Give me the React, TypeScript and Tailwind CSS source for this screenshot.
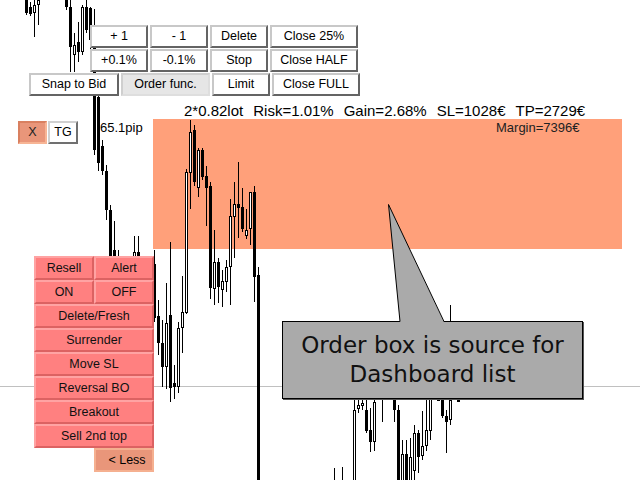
import React from "react";

// [x, bodyTop, bodyBottom, high, low, filled]
const candles: [number, number, number, number, number, number][] = [
  [26, 0, 13, 0, 15, 1],
  [30, 7, 14, 2, 16, 1],
  [34, 5, 13, 0, 37, 0],
  [38, 0, 5, 0, 25, 0],
  [66, 0, 7, 0, 10, 1],
  [70, 7, 47, 0, 72, 1],
  [74, 45, 55, 33, 72, 0],
  [78, 42, 52, 22, 62, 1],
  [82, 7, 52, 5, 55, 0],
  [86, 7, 30, 0, 33, 1],
  [90, 8, 40, 7, 50, 1],
  [94, 28, 150, 9, 155, 1],
  [98, 97, 163, 90, 171, 1],
  [102, 146, 171, 140, 175, 1],
  [106, 171, 210, 165, 220, 1],
  [110, 210, 300, 205, 310, 1],
  [114, 250, 300, 221, 310, 1],
  [118, 260, 300, 250, 310, 1],
  [134, 252, 300, 236, 310, 0],
  [138, 252, 300, 236, 310, 1],
  [154, 264, 318, 250, 322, 1],
  [158, 316, 343, 300, 355, 1],
  [162, 343, 367, 320, 387, 1],
  [166, 323, 367, 283, 389, 0],
  [170, 315, 388, 242, 402, 1],
  [174, 383, 387, 365, 399, 1],
  [178, 328, 387, 322, 393, 0],
  [182, 312, 328, 276, 353, 0],
  [186, 172, 313, 169, 314, 0],
  [190, 132, 173, 120, 209, 0],
  [194, 130, 182, 125, 186, 1],
  [198, 150, 188, 148, 197, 0],
  [202, 150, 177, 148, 180, 1],
  [206, 176, 188, 166, 226, 1],
  [210, 186, 288, 182, 299, 1],
  [214, 262, 289, 230, 305, 0],
  [218, 262, 287, 258, 303, 1],
  [222, 281, 290, 270, 307, 0],
  [226, 267, 282, 260, 292, 0],
  [230, 216, 267, 199, 305, 0],
  [234, 204, 217, 182, 258, 0],
  [238, 204, 208, 162, 238, 1],
  [242, 207, 229, 188, 232, 1],
  [246, 230, 236, 209, 239, 0],
  [250, 192, 229, 192, 245, 0],
  [254, 192, 277, 186, 302, 1],
  [258, 275, 520, 267, 520, 1],
  [334, 480, 520, 468, 520, 1],
  [342, 480, 520, 467, 520, 1],
  [354, 410, 520, 399, 520, 0],
  [358, 405, 409, 398, 413, 0],
  [362, 403, 406, 398, 410, 0],
  [366, 410, 431, 399, 433, 1],
  [370, 430, 442, 408, 452, 1],
  [374, 402, 442, 398, 451, 0],
  [382, 399, 400, 398, 422, 1],
  [394, 399, 410, 398, 422, 1],
  [398, 410, 520, 405, 520, 1],
  [402, 454, 520, 440, 520, 0],
  [406, 454, 520, 440, 520, 1],
  [410, 457, 520, 438, 520, 0],
  [414, 433, 471, 425, 480, 0],
  [418, 433, 457, 430, 473, 1],
  [422, 446, 456, 411, 460, 0],
  [426, 430, 446, 400, 451, 0],
  [430, 399, 431, 300, 440, 0],
  [438, 398, 401, 398, 401, 1],
  [442, 399, 416, 398, 418, 1],
  [446, 416, 422, 410, 453, 1],
  [450, 400, 420, 305, 425, 0],
  [454, 398, 400, 398, 400, 1],
  [458, 399, 402, 399, 402, 1],
];

const grayBtn =
  "flex items-center justify-center h-[23px] border-2 border-t-[#c8c8c8] border-l-[#c8c8c8] border-r-[#646464] border-b-[#646464] bg-white text-black";
const redBtn =
  "flex flex-1 items-center justify-center h-[24px] border-2 border-t-[#ffa3a3] border-l-[#ffa3a3] border-r-[#dc6262] border-b-[#dc6262] bg-[#ff8080] text-[#111]";

function Chart() {
  return (
    <svg className="absolute inset-0" width={640} height={480} shapeRendering="crispEdges">
      <rect x={153} y={119} width={469} height={130} fill="#ffa07a" />
      <line x1={0} y1={386.5} x2={640} y2={386.5} stroke="#c0c0c0" strokeWidth={1} />
      {candles.map(([x, t, b, h, l, f]) => (
        <g key={x}>
          <line x1={x + 0.5} y1={h} x2={x + 0.5} y2={l} stroke="#000" strokeWidth={1} />
          {f ? (
            <rect x={x - 1} y={t} width={3} height={Math.max(1, b - t)} fill="#000" />
          ) : (
            <rect x={x - 0.5} y={t + 0.5} width={2} height={Math.max(1, b - t - 1)} fill="#fff" stroke="#000" strokeWidth={1} />
          )}
        </g>
      ))}
    </svg>
  );
}

export default function App() {
  return (
    <div className="relative w-[640px] h-[480px] overflow-hidden bg-white font-['Liberation_Sans',Arial,sans-serif] text-black">
      <Chart />

      <div className="absolute left-[184px] top-[102px] flex gap-[10px] text-[15px] leading-[17px] whitespace-pre">
        <span>2*0.82lot</span>
        <span>Risk=1.01%</span>
        <span>Gain=2.68%</span>
        <span>SL=1028€</span>
        <span>TP=2729€</span>
      </div>
      <div className="absolute left-[496px] top-[120px] text-[13px] leading-[15px] text-[#222]">Margin=7396€</div>
      <div className="absolute left-[100px] top-[120px] text-[13px] leading-[15px]">65.1pip</div>

      <div className="absolute left-[29px] top-[25px] flex flex-col gap-[1px] text-[12.5px]">
        <div className="flex gap-[2px] pl-[61px]">
          <div className={`${grayBtn} w-[58px]`}>+ 1</div>
          <div className={`${grayBtn} w-[58px]`}>- 1</div>
          <div className={`${grayBtn} w-[58px]`}>Delete</div>
          <div className={`${grayBtn} w-[88px]`}>Close 25%</div>
        </div>
        <div className="flex gap-[2px] pl-[61px]">
          <div className={`${grayBtn} w-[58px]`}>+0.1%</div>
          <div className={`${grayBtn} w-[58px]`}>-0.1%</div>
          <div className={`${grayBtn} w-[58px]`}>Stop</div>
          <div className={`${grayBtn} w-[88px]`}>Close HALF</div>
        </div>
        <div className="flex gap-[2px]">
          <div className={`${grayBtn} w-[90px]`}>Snap to Bid</div>
          <div className="flex items-center justify-center h-[23px] w-[89px] border-2 border-t-[#cfcfcf] border-l-[#cfcfcf] border-r-[#dedede] border-b-[#dedede] bg-[#e6e6e6]">
            Order func.
          </div>
          <div className={`${grayBtn} w-[58px]`}>Limit</div>
          <div className={`${grayBtn} w-[88px]`}>Close FULL</div>
        </div>
      </div>

      <div className="absolute left-[18px] top-[121px] flex gap-[1px] text-[12.5px]">
        <div className="flex items-center justify-center w-[29px] h-[23px] border-2 border-t-[#d98060] border-l-[#d98060] border-r-[#f7b595] border-b-[#f7b595] bg-[#e9967a] text-[#222]">
          X
        </div>
        <div className="flex items-center justify-center w-[30px] h-[23px] border-2 border-t-[#d0d0d0] border-l-[#d0d0d0] border-r-[#707070] border-b-[#707070] bg-white">
          TG
        </div>
      </div>

      <div className="absolute left-[34px] top-[256px] w-[120px] flex flex-col text-[12.5px]">
        <div className="flex">
          <div className={redBtn}>Resell</div>
          <div className={redBtn}>Alert</div>
        </div>
        <div className="flex">
          <div className={redBtn}>ON</div>
          <div className={redBtn}>OFF</div>
        </div>
        <div className="flex"><div className={redBtn}>Delete/Fresh</div></div>
        <div className="flex"><div className={redBtn}>Surrender</div></div>
        <div className="flex"><div className={redBtn}>Move SL</div></div>
        <div className="flex"><div className={redBtn}>Reversal BO</div></div>
        <div className="flex"><div className={redBtn}>Breakout</div></div>
        <div className="flex"><div className={redBtn}>Sell 2nd top</div></div>
      </div>
      <div className="absolute left-[94px] top-[448px] flex items-center justify-center w-[60px] h-[24px] border-2 border-[#f5b090] bg-[#e9967a] text-[12.5px] pl-[6px]">
        &lt; Less
      </div>

      <div className="absolute left-[282px] top-[321px] w-[301px] h-[78px] border border-black bg-[#aaaaaa] shadow-[1px_1px_0_#555] flex flex-col items-center pt-[9px] font-['DejaVu_Sans',Verdana,sans-serif] text-[23px] leading-[29px] text-[#111]">
        <span>Order box is source for</span>
        <span>Dashboard list</span>
      </div>
      <svg className="absolute inset-0 pointer-events-none" width={640} height={480}>
        <polygon points="400,322 388.5,204.5 444,322" fill="#aaaaaa" />
        <polyline points="400,321.5 388.5,204.5 444,321.5" fill="none" stroke="#000" strokeWidth={1} />
      </svg>
    </div>
  );
}
